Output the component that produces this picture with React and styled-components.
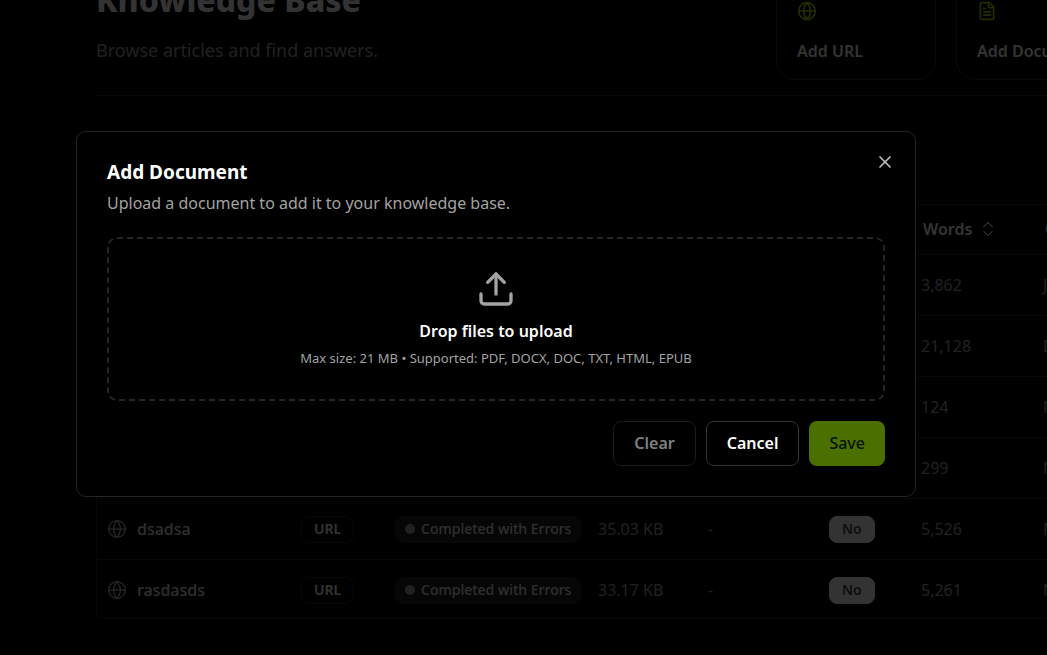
import React, { useState } from "react";
import styled, { createGlobalStyle, css } from "styled-components";
import { ChevronsUpDown, FileText, Globe, X } from "lucide-react";

const GlobalStyle = createGlobalStyle`
  * {
    box-sizing: border-box;
  }

  body {
    margin: 0;
    background: #000;
    color: #fff;
    font-family: "Noto Sans", "Open Sans", sans-serif;
    font-size: 16px;
    overflow: hidden;
  }

  button {
    font-family: inherit;
    cursor: pointer;
  }
`;

// page behind the dialog
const Page = styled.main`
  min-height: 100vh;
  padding: 0 0 38px 96px;
  overflow: hidden;
`;

const Content = styled.div`
  min-width: 1020px;
`;

const Header = styled.header`
  display: flex;
  justify-content: space-between;
  align-items: flex-end;
  margin-top: -20px;
  padding-bottom: 15px;
  border-bottom: 1px solid #262626;
`;

const Intro = styled.div`
  padding-bottom: 16px;
`;

const PageTitle = styled.h1`
  margin: 0 0 16px;
  font-size: 32px;
  line-height: 40px;
  font-weight: 800;
  white-space: nowrap;
`;

const PageText = styled.p`
  margin: 0;
  color: #a3a3a3;
  font-size: 18px;
  line-height: 28px;
  white-space: nowrap;
`;

const Actions = styled.div`
  display: flex;
  gap: 20px;
`;

const ActionCard = styled.button`
  display: flex;
  flex-direction: column;
  align-items: flex-start;
  gap: 18px;
  width: 160px;
  padding: 20px 20px 16px;
  background: transparent;
  border: 1px solid #333;
  border-radius: 20px;
  color: #fff;
  font-size: 16px;
  line-height: 24px;
  font-weight: 600;
  white-space: nowrap;

  svg {
    color: #9fdf00;
  }
`;

const TableFrame = styled.div`
  margin-top: 108px;
  border: 1px solid #262626;
  border-radius: 6px;
`;

const Table = styled.table`
  width: 100%;
  table-layout: fixed;
  border-collapse: separate;
  border-spacing: 0;
`;

const HeadCell = styled.th`
  width: ${({ $width }) => ($width ? `${$width}px` : "auto")};
  height: 50px;
  padding: 0 0 2px 12px;
  border-bottom: 1px solid #262626;
  font-weight: 600;
  text-align: left;
`;

const SortButton = styled.button`
  display: flex;
  align-items: center;
  gap: 6px;
  padding: 0;
  background: transparent;
  border: none;
  color: #fff;
  font-size: 16px;
  line-height: 24px;
  font-weight: 600;

  svg {
    color: #d4d4d4;
  }
`;

const Row = styled.tr`
  &:not(:last-child) td {
    height: 61px;
    border-bottom: 1px solid #262626;
  }

  &:last-child td {
    height: 58px;
    padding-top: 2px;
  }
`;

const Cell = styled.td`
  padding: 0 0 0 10px;
  color: #a3a3a3;
  font-size: 16px;
  line-height: 24px;
  white-space: nowrap;
`;

const NameCell = styled.div`
  display: flex;
  align-items: center;
  gap: 10px;
  color: #e5e5e5;
  font-weight: 500;

  svg {
    color: #c4c4c4;
  }
`;

const badgeKinds = {
  outline: css`
    padding: 0 12px;
    border: 1px solid #262626;
    color: #fff;
    font-weight: 600;
  `,
  status: css`
    padding: 0 9px;
    border: 1px solid #1f1f1f;
    background: #1f1f1f;
    color: #e5e5e5;
    font-weight: 500;
  `,
  solid: css`
    padding: 0 12px;
    border: 1px solid #fff;
    background: #fff;
    color: #404a55;
    font-weight: 600;
  `,
};

const Badge = styled.span`
  display: inline-flex;
  align-items: center;
  gap: 6px;
  height: 27px;
  border-radius: 8px;
  font-size: 14px;
  line-height: 20px;
  vertical-align: middle;
  ${({ $kind }) => badgeKinds[$kind]}
`;

const Dot = styled.span`
  width: 10px;
  height: 10px;
  border-radius: 50%;
  background: #a3a3a3;
`;

// dialog
const Overlay = styled.div`
  position: fixed;
  inset: 0;
  display: flex;
  align-items: flex-start;
  padding: 131px 131px 0 76px;
  background: rgba(0, 0, 0, 0.8);
`;

const Dialog = styled.section`
  position: relative;
  flex: 1;
  max-width: 840px;
  padding: 28px 30px 30px;
  background: #000;
  border: 1px solid #262626;
  border-radius: 10px;
`;

const DialogTitle = styled.h2`
  margin: 0;
  font-size: 19px;
  line-height: 25px;
  font-weight: 700;
`;

const DialogText = styled.p`
  margin: 4px 0 20px;
  color: #a3a3a3;
  line-height: 28px;
`;

const CloseButton = styled.button`
  position: absolute;
  top: 20px;
  right: 20px;
  display: flex;
  padding: 0;
  background: transparent;
  border: none;
  color: #bfbfbf;
`;

const DropZone = styled.button`
  display: flex;
  flex-direction: column;
  align-items: center;
  width: 100%;
  padding: 30px 20px 28px;
  background: transparent;
  border: 2px dashed #262626;
  border-radius: 10px;
  color: #fff;
`;

const DropTitle = styled.span`
  margin-top: 8px;
  font-size: 16px;
  line-height: 28px;
  font-weight: 600;
`;

const DropHint = styled.span`
  color: #a3a3a3;
  font-size: 13px;
  line-height: 26px;
`;

const Footer = styled.footer`
  display: flex;
  justify-content: flex-end;
  gap: 10px;
  margin-top: 20px;
`;

const Button = styled.button`
  height: 45px;
  padding: 0 20px 2px;
  background: ${({ $primary }) => ($primary ? "#4b7000" : "transparent")};
  border: ${({ $primary }) => ($primary ? "none" : "1px solid #333")};
  border-radius: 8px;
  color: ${({ $primary }) => ($primary ? "#081000" : "#fff")};
  font-size: 16px;
  line-height: 24px;
  font-weight: ${({ $primary }) => ($primary ? 500 : 600)};

  &:disabled {
    cursor: default;
  }
`;

const ClearButton = styled(Button)`
  border-color: #1c1c1c;
  color: #808080;
`;

const UploadIcon = () => (
  <svg width="40" height="40" viewBox="0 0 24 24" fill="none" stroke="#a3a3a3"
    strokeWidth="2" strokeLinecap="round" strokeLinejoin="round">
    <path d="M3 15v4a2 2 0 0 0 2 2h14a2 2 0 0 0 2-2v-4" />
    <path d="M17 8l-5-5-5 5" />
    <path d="M12 3v12" />
  </svg>
);

const columns = [
  { width: 194 },
  { width: 94 },
  { width: 203 },
  { width: 110 },
  { width: 121 },
  { width: 92 },
  { width: 122, label: "Words" },
  { label: "Created" },
];

const documents = [
  { words: "3,862", created: "Jan" },
  { words: "21,128", created: "Dec" },
  { words: "124", created: "Nov" },
  { words: "299", created: "Nov" },
  { name: "dsadsa", size: "35.03 KB", words: "5,526", created: "Nov" },
  { name: "rasdasds", size: "33.17 KB", words: "5,261", created: "Nov" },
];

const DocumentRow = ({ item }) => (
  <Row>
    <Cell>
      {item.name && (
        <NameCell>
          <Globe size={20} strokeWidth={1.5} />
          {item.name}
        </NameCell>
      )}
    </Cell>
    <Cell>{item.name && <Badge $kind="outline">URL</Badge>}</Cell>
    <Cell>
      {item.name && (
        <Badge $kind="status">
          <Dot />
          Completed with Errors
        </Badge>
      )}
    </Cell>
    <Cell>{item.size}</Cell>
    <Cell>{item.name && "-"}</Cell>
    <Cell>{item.name && <Badge $kind="solid">No</Badge>}</Cell>
    <Cell>{item.words}</Cell>
    <Cell>{item.created}</Cell>
  </Row>
);

const KnowledgeBase = () => {
  const [open, setOpen] = useState(true);

  return (
    <>
      <GlobalStyle />
      <Page>
        <Content>
          <Header>
            <Intro>
              <PageTitle>Knowledge Base</PageTitle>
              <PageText>Browse articles and find answers.</PageText>
            </Intro>
            <Actions>
              <ActionCard>
                <Globe size={20} strokeWidth={2} />
                Add URL
              </ActionCard>
              <ActionCard onClick={() => setOpen(true)}>
                <FileText size={20} strokeWidth={2} />
                Add Document
              </ActionCard>
            </Actions>
          </Header>
          <TableFrame>
            <Table>
              <thead>
                <tr>
                  {columns.map((column, i) => (
                    <HeadCell key={i} $width={column.width}>
                      {column.label && (
                        <SortButton>
                          {column.label}
                          <ChevronsUpDown size={20} strokeWidth={1.5} />
                        </SortButton>
                      )}
                    </HeadCell>
                  ))}
                </tr>
              </thead>
              <tbody>
                {documents.map((item) => (
                  <DocumentRow key={item.words} item={item} />
                ))}
              </tbody>
            </Table>
          </TableFrame>
        </Content>
      </Page>
      {open && (
        <Overlay>
          <Dialog role="dialog" aria-modal="true" aria-labelledby="dialog-title">
            <DialogTitle id="dialog-title">Add Document</DialogTitle>
            <DialogText>
              Upload a document to add it to your knowledge base.
            </DialogText>
            <CloseButton aria-label="Close" onClick={() => setOpen(false)}>
              <X size={20} strokeWidth={2} />
            </CloseButton>
            <DropZone>
              <UploadIcon />
              <DropTitle>Drop files to upload</DropTitle>
              <DropHint>
                Max size: 21 MB • Supported: PDF, DOCX, DOC, TXT, HTML, EPUB
              </DropHint>
            </DropZone>
            <Footer>
              <ClearButton disabled>Clear</ClearButton>
              <Button onClick={() => setOpen(false)}>Cancel</Button>
              <Button $primary disabled>
                Save
              </Button>
            </Footer>
          </Dialog>
        </Overlay>
      )}
    </>
  );
};

export default KnowledgeBase;
